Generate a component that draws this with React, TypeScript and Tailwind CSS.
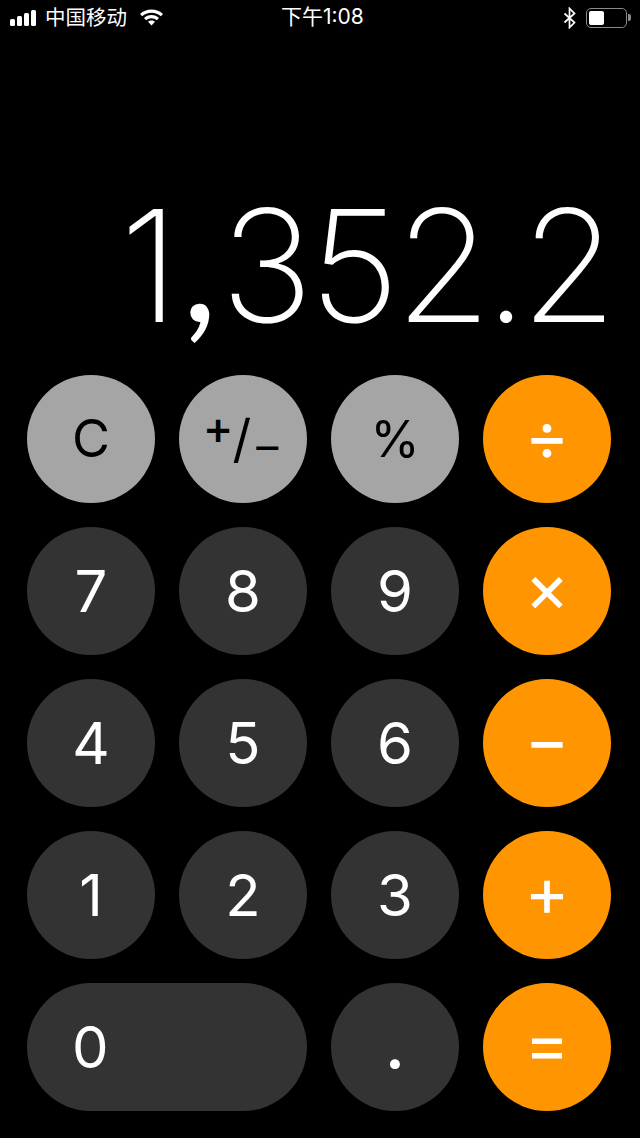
import React from "react";

const font = "font-['Inter','Noto_Sans_CJK_SC',sans-serif]";

const Btn = ({
  children,
  tone,
  wide,
}: {
  children: React.ReactNode;
  tone: "gray" | "dark" | "orange";
  wide?: boolean;
}) => {
  const colors = {
    gray: "bg-[#a5a5a5] text-black",
    dark: "bg-[#333333] text-white",
    orange: "bg-[#ff9500] text-white",
  };
  return (
    <div
      className={`h-[128px] rounded-full flex items-center ${colors[tone]} ${
        wide ? "col-span-2 justify-start pl-[45px]" : "justify-center"
      }`}
    >
      {children}
    </div>
  );
};

const Num = ({ v }: { v: string }) => (
  <span className="text-[58px] leading-none font-normal">{v}</span>
);

const Op = ({ v }: { v: string }) => (
  <span className="text-[68px] leading-none font-normal -mt-[9px]">{v}</span>
);

export default function App() {
  return (
    <div className={`w-[640px] h-[1138px] bg-black text-white overflow-hidden ${font}`}>
      {/* Status bar */}
      <div className="h-[36px] relative flex items-center pl-[10px] pr-[9px]">
        <div className="flex items-end gap-[2px] h-[16px]">
          <div className="w-[5px] h-[7px] rounded-[1.5px] bg-white" />
          <div className="w-[5px] h-[10px] rounded-[1.5px] bg-white" />
          <div className="w-[5px] h-[13px] rounded-[1.5px] bg-white" />
          <div className="w-[5px] h-[16px] rounded-[1.5px] bg-white" />
        </div>
        <span className="ml-[9px] text-[20.5px] leading-none">中国移动</span>
        <svg className="ml-[12px] -mt-[2px]" width="25" height="18" viewBox="0 0 25 18" fill="white">
          <path d="M12.5 1.5C8 1.5 4 3.2 1 6l2.2 2.3C5.6 6 8.9 4.7 12.5 4.7s6.9 1.3 9.3 3.6L24 6c-3-2.8-7-4.5-11.5-4.5z" />
          <path d="M12.5 7c-2.9 0-5.5 1.1-7.5 2.9l2.2 2.3c1.4-1.3 3.3-2 5.3-2s3.9.7 5.3 2l2.2-2.3C18 8.1 15.4 7 12.5 7z" />
          <path d="M12.5 12.4c-1.4 0-2.6.5-3.5 1.4l3.5 3.7 3.5-3.7c-.9-.9-2.1-1.4-3.5-1.4z" />
        </svg>
        <span className="absolute left-[281px] top-[6px] text-[21px] leading-[22px]">下午1:08</span>
        <div className="ml-auto flex items-center -mt-[1px]">
          <svg width="14" height="22" viewBox="0 0 14 22" fill="none" stroke="white" strokeWidth="1.7">
            <path d="M1.5 6.5l10 9-5 5V1.5l5 5-10 9" />
          </svg>
          <div className="ml-[9px] w-[41px] h-[20px] rounded-[5px] border border-[#8a8a8a] p-[2px]">
            <div className="w-[15px] h-full rounded-[2px] bg-white" />
          </div>
          <div className="ml-[1px] w-[3px] h-[7px] rounded-r-[2px] bg-[#8a8a8a]" />
        </div>
      </div>

      {/* Display */}
      <div className="h-[339px] pr-[30px] flex justify-end items-start">
        <span className="mt-[148px] text-[156px] leading-none [font-weight:250] whitespace-nowrap">
          <span className="mr-[3px]">1</span>
          <span className="font-['Lato'] font-normal mr-[3px]">,</span>
          <span className="tracking-[-4px]">35</span>
          <span className="tracking-[-7px]">2.2</span>
        </span>
      </div>

      {/* Keypad */}
      <div className="grid grid-cols-[repeat(4,128px)] gap-[24px] pl-[27px]">
        <Btn tone="gray"><span className="text-[52px] leading-none">C</span></Btn>
        <Btn tone="gray">
          <span className="flex items-center leading-none whitespace-nowrap -ml-[5px]">
            <span className="text-[46px] font-medium -mt-[24px]">+</span>
            <span className="text-[52px] -ml-[1px]">/</span>
            <span className="text-[44px] ml-[5px] mt-[14px]">–</span>
          </span>
        </Btn>
        <Btn tone="gray"><span className="text-[50px] leading-none">%</span></Btn>
        <Btn tone="orange"><Op v="÷" /></Btn>

        <Btn tone="dark"><Num v="7" /></Btn>
        <Btn tone="dark"><Num v="8" /></Btn>
        <Btn tone="dark"><Num v="9" /></Btn>
        <Btn tone="orange"><Op v="×" /></Btn>

        <Btn tone="dark"><Num v="4" /></Btn>
        <Btn tone="dark"><Num v="5" /></Btn>
        <Btn tone="dark"><Num v="6" /></Btn>
        <Btn tone="orange"><Op v="−" /></Btn>

        <Btn tone="dark"><Num v="1" /></Btn>
        <Btn tone="dark"><Num v="2" /></Btn>
        <Btn tone="dark"><Num v="3" /></Btn>
        <Btn tone="orange"><Op v="+" /></Btn>

        <Btn tone="dark" wide><Num v="0" /></Btn>
        <Btn tone="dark">
          <span className="text-[58px] leading-none font-bold">.</span>
        </Btn>
        <Btn tone="orange"><Op v="=" /></Btn>
      </div>
    </div>
  );
}
